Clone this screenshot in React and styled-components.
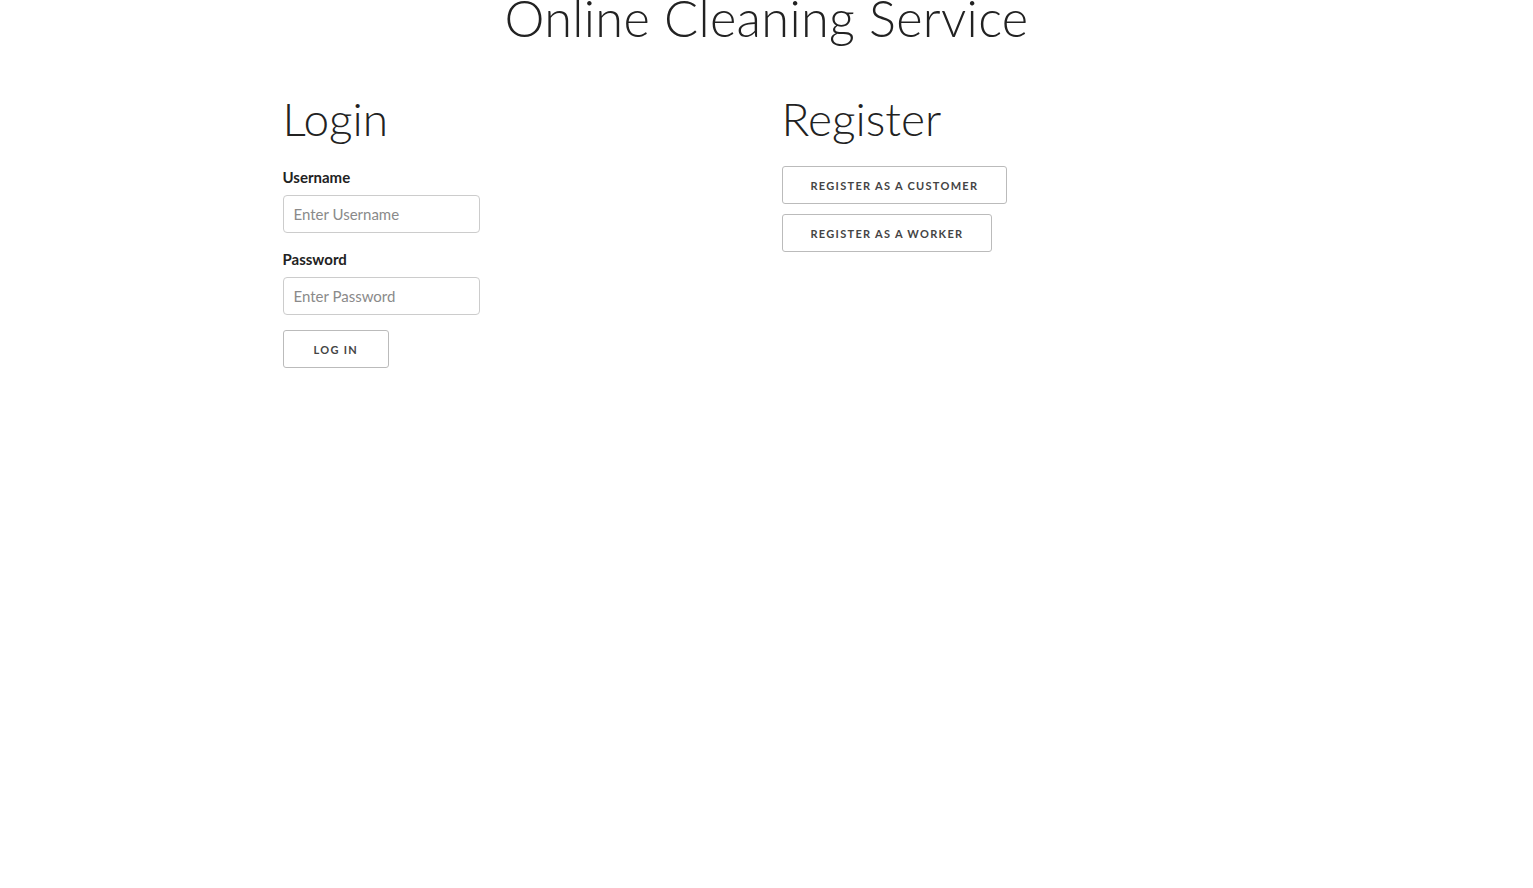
import styled, { createGlobalStyle } from "styled-components";

const GlobalStyle = createGlobalStyle`
  body {
    margin: 0;
    background: #fff;
    font-family: "Lato", "Open Sans", sans-serif;
    color: #333;
  }
`;

const Page = styled.div`
  width: 1000px;
  margin: 0 auto;
`;

const Title = styled.h1`
  margin: -14px 0 0;
  text-align: center;
  font-size: 50.5px;
  font-weight: 300;
  line-height: 64px;
  color: #222;
  letter-spacing: 0.3px;
`;

const Row = styled.div`
  display: grid;
  grid-template-columns: 1fr 1fr;
  margin-top: 41px;
`;

const Column = styled.section`
  padding: 0 15px 0 ${(p) => p.$pl}px;
  display: flex;
  flex-direction: column;
  align-items: flex-start;
`;

const Heading = styled.h2`
  margin: 0 0 ${(p) => p.$mb}px;
  font-size: 46px;
  font-weight: 300;
  line-height: 56px;
  color: #222;
`;

const Label = styled.label`
  font-size: 15px;
  font-weight: 700;
  color: #222;
  margin-bottom: 9px;
`;

const Input = styled.input`
  box-sizing: border-box;
  width: 197px;
  height: 38px;
  padding: 0 10px;
  border: 1px solid #ccc;
  border-radius: 4px;
  font-family: inherit;
  font-size: 15px;
  color: #555;
  margin-bottom: ${(p) => p.$mb}px;
  &::placeholder {
    color: #8a8a8a;
  }
`;

const Button = styled.button`
  box-sizing: border-box;
  height: 38px;
  padding: 0 ${(p) => p.$px || 28}px;
  border: 1px solid #bbb;
  border-radius: 3px;
  background: #fff;
  font-family: inherit;
  font-size: 11px;
  font-weight: 700;
  letter-spacing: 1.3px;
  text-transform: uppercase;
  color: #444;
  margin-bottom: ${(p) => p.$gap || 0}px;
  cursor: pointer;
`;

export default function App() {
  return (
    <Page>
      <GlobalStyle />
      <Title>Online Cleaning Service</Title>
      <Row>
        <Column $pl={16}>
          <Heading $mb={21}>Login</Heading>
          <Label>Username</Label>
          <Input $mb={17} placeholder="Enter Username" />
          <Label>Password</Label>
          <Input $mb={15} type="password" placeholder="Enter Password" />
          <Button $px={30}>Log in</Button>
        </Column>
        <Column $pl={15}>
          <Heading $mb={19}>Register</Heading>
          <Button $gap={10}>Register as a customer</Button>
          <Button>Register as a worker</Button>
        </Column>
      </Row>
    </Page>
  );
}
